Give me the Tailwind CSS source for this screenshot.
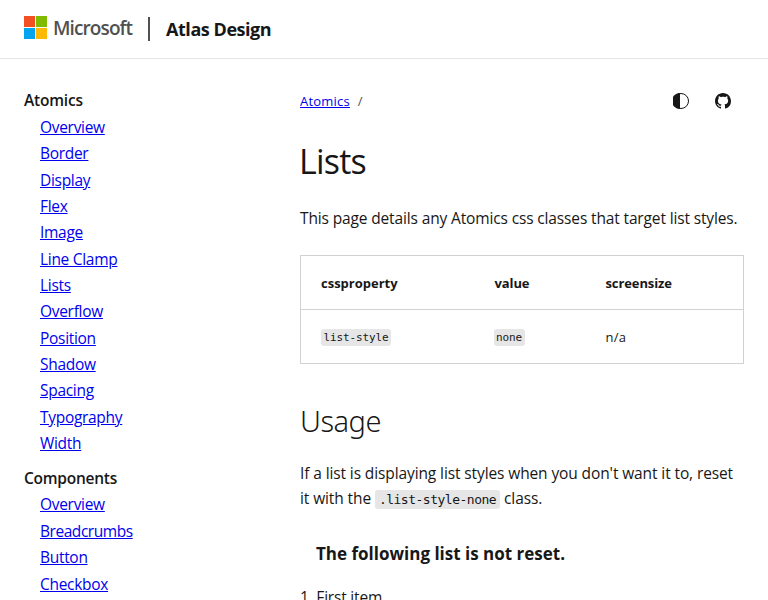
<!DOCTYPE html>
<html lang="en">
<head>
<meta charset="utf-8">
<title>Lists - Atlas Design</title>
<script src="https://cdn.jsdelivr.net/npm/@tailwindcss/browser@4"></script>
</head>
<body class="h-[600px] overflow-hidden bg-white font-['Open_Sans','Noto_Sans',sans-serif] text-[15.5px] text-[#171717]">
<header class="flex h-[59px] items-center border-b border-[#e6e6e6] pl-6">
  <svg class="-mt-1 h-[23px] w-[23px]" viewBox="0 0 23 23"><path fill="#f25022" d="M0 0h11v11H0z"/><path fill="#80ba01" d="M12 0h11v11H12z"/><path fill="#02a4ef" d="M0 12h11v11H0z"/><path fill="#ffb902" d="M12 12h11v11H12z"/></svg>
  <span class="-mt-[3px] ml-[6px] w-[79px] whitespace-nowrap text-[19px] font-semibold leading-6 tracking-[-0.9px] text-[#505050]">Microsoft</span>
  <span class="ml-[16px] h-6 w-[2px] bg-[#505050]"></span>
  <a class="ml-4 mt-px whitespace-nowrap text-[18px] font-bold tracking-[-0.45px]">Atlas Design</a>
</header>
<div class="flex">
  <nav class="w-[276px] shrink-0 pl-6 pt-[29px]">
    <h2 class="h-[26px] font-semibold leading-[25px] tracking-[-0.2px]">Atomics</h2>
    <ul class="pl-4 leading-[26.35px] tracking-[-0.3px] text-[#0000ee] underline">
      <li><a>Overview</a></li><li><a>Border</a></li><li><a>Display</a></li><li><a>Flex</a></li><li><a>Image</a></li><li><a>Line Clamp</a></li><li><a>Lists</a></li><li><a>Overflow</a></li><li><a>Position</a></li><li><a>Shadow</a></li><li><a>Spacing</a></li><li><a>Typography</a></li><li><a>Width</a></li>
    </ul>
    <h2 class="mt-[9px] h-[26px] font-semibold leading-[26px] tracking-[-0.25px]">Components</h2>
    <ul class="pl-4 leading-[26.35px] tracking-[-0.3px] text-[#0000ee] underline">
      <li><a>Overview</a></li><li><a class="tracking-[-0.45px]">Breadcrumbs</a></li><li><a>Button</a></li><li><a>Checkbox</a></li>
    </ul>
  </nav>
  <main class="ml-6 w-[444px] pt-[31px]">
    <div class="flex h-[22px] items-center text-[13px] tracking-[0.2px]">
      <a class="mt-px text-[#0000ee] underline">Atomics</a><span class="ml-2 mt-px text-[#505050]">/</span>
      <svg class="ml-auto h-4 w-4" viewBox="0 0 16 16"><circle cx="8" cy="8" r="7.5" fill="none" stroke="#171717"/><path fill="#171717" d="M7 0a8 8 0 0 0 0 16z"/></svg>
      <svg class="ml-[26px] mr-[13px] h-4 w-4" viewBox="0 0 16 16"><path fill="#171717" d="M8 0C3.58 0 0 3.58 0 8c0 3.54 2.29 6.53 5.47 7.59.4.07.55-.17.55-.38 0-.19-.01-.82-.01-1.49-2.01.37-2.53-.49-2.69-.94-.09-.23-.48-.94-.82-1.13-.28-.15-.68-.52-.01-.53.63-.01 1.08.58 1.23.82.72 1.21 1.87.87 2.33.66.07-.52.28-.87.51-1.07-1.78-.2-3.64-.89-3.64-3.95 0-.87.31-1.59.82-2.15-.08-.2-.36-1.02.08-2.12 0 0 .67-.21 2.2.82.64-.18 1.32-.27 2-.27s1.36.09 2 .27c1.53-1.04 2.2-.82 2.2-.82.44 1.1.16 1.92.08 2.12.51.56.82 1.27.82 2.15 0 3.07-1.87 3.75-3.65 3.95.29.25.54.73.54 1.48 0 1.07-.01 1.93-.01 2.2 0 .21.15.46.55.38A8.01 8.01 0 0 0 16 8c0-4.42-3.58-8-8-8z"/></svg>
    </div>
    <h1 class="mt-[26px] h-[46px] -ml-px text-[34px] leading-[46px] tracking-[-0.8px]">Lists</h1>
    <p class="mt-[22px] whitespace-nowrap leading-[25px] tracking-[-0.14px]">This page details any Atomics css classes that target list styles.</p>
    <table class="mt-[24px] h-[109px] w-[444px] table-fixed border-collapse border border-[#d2d2d2] text-left text-[13px]">
      <tr class="h-[54px] border-b border-[#d2d2d2]"><th class="w-[174px] pl-5 pt-[2px]">cssproperty</th><th class="w-[111px] pl-5 pt-[2px] tracking-[-0.1px]">value</th><th class="pl-5 pt-[2px] tracking-[-0.1px]">screensize</th></tr>
      <tr class="h-[54px]"><td class="pl-5"><code class="rounded-[3px] bg-[#e6e6e6] px-[2.5px] py-[2px] font-['DejaVu_Sans_Mono',monospace] text-[11px] tracking-[-0.12px]">list-style</code></td><td class="pl-[19px]"><code class="rounded-[3px] bg-[#e6e6e6] px-[2.5px] py-[2px] font-['DejaVu_Sans_Mono',monospace] text-[11px] tracking-[-0.12px]">none</code></td><td class="pl-5 pt-[2px] tracking-[0.2px]">n/a</td></tr>
    </table>
    <h2 class="mt-[37px] h-[40px] font-['Noto_Sans','Open_Sans',sans-serif] text-[29px] font-light leading-[40px] tracking-[-0.5px]">Usage</h2>
    <p class="mt-[20px] whitespace-nowrap leading-[25px] tracking-[-0.11px]">If a list is displaying list styles when you don't want it to, reset<br>it with the <code class="rounded-[3px] bg-[#e6e6e6] px-[4px] py-[2px] font-['DejaVu_Sans_Mono',monospace] text-[13px] tracking-[-0.5px]">.list-style-none</code> class.</p>
    <h3 class="ml-4 mt-[28px] h-[26px] whitespace-nowrap text-[17px] font-bold leading-[28px]">The following list is not reset.</h3>
    <div class="mt-[18px] leading-[27px] tracking-[-0.2px]">1. First item</div>
  </main>
</div>
</body>
</html>
